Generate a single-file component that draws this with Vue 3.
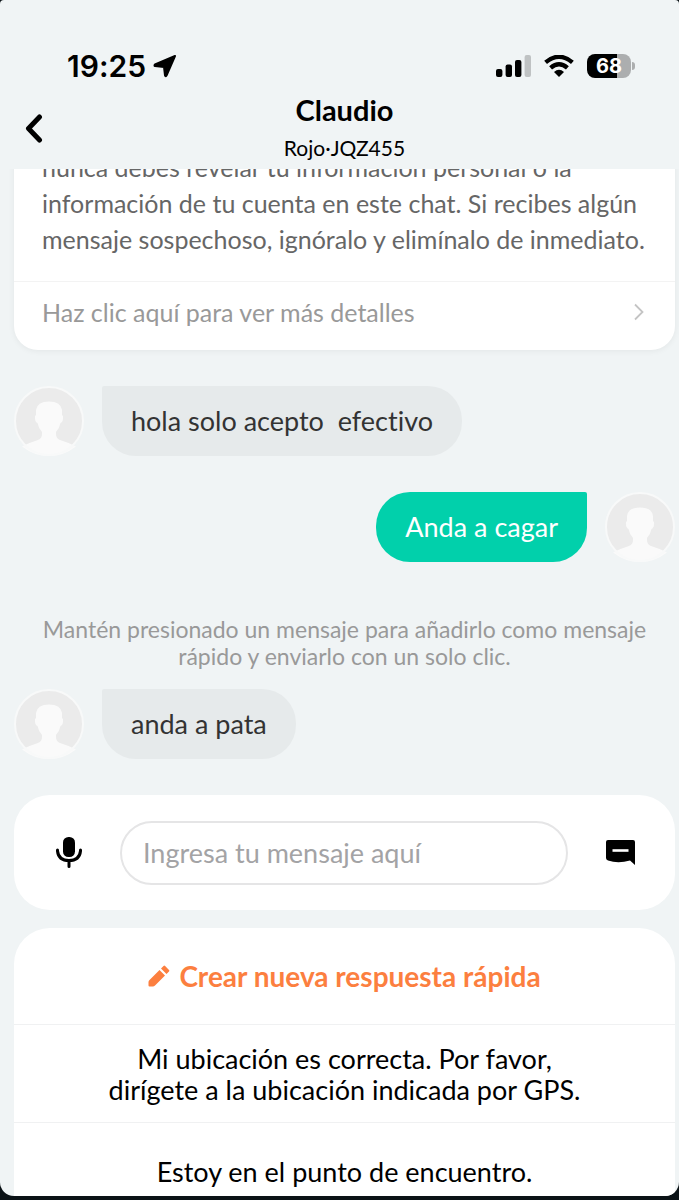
<script setup>
import { ref } from "vue";

const draft = ref("");

const messages = [
    { id: 1, mine: false, text: "hola solo acepto  efectivo" },
    { id: 2, mine: true, text: "Anda a cagar" },
    { id: 3, hint: true, text: "Mantén presionado un mensaje para añadirlo como mensaje rápido y enviarlo con un solo clic." },
    { id: 4, mine: false, text: "anda a pata" },
];

const quickReplies = [
    "Mi ubicación es correcta. Por favor, dirígete a la ubicación indicada por GPS.",
    "Estoy en el punto de encuentro.",
];

const useReply = text => {
    draft.value = text;
};
</script>

<template>
    <div class="device">
        <main class="screen">
            <header>
                <div class="status">
                    <div class="clock">
                        <span>19:25</span>
                        <svg width="24" height="24" viewBox="0 0 24 24">
                            <path d="M22 2 2 10.5Q1 11.5 2 12L11 13 12 21.5Q12.500 23 13.500 21.500Z" stroke="#000" stroke-width="2" stroke-linejoin="round" />
                        </svg>
                    </div>
                    <div class="signals">
                        <svg width="35" height="22" viewBox="0 0 35 22">
                            <rect x="0" y="14" width="6.4" height="8" rx="2" />
                            <rect x="9.6" y="9.6" width="6.4" height="12.4" rx="2" />
                            <rect x="19" y="5" width="6.4" height="17" rx="2" />
                            <rect x="28.6" y="0" width="6.4" height="22" rx="2" fill="#bfc2c3" />
                        </svg>
                        <svg width="30" height="22" viewBox="0 0 30 22">
                            <path d="M1.6 7.4Q15-3.8 28.4 7.4M6.6 12.8Q15 5.6 23.4 12.8" fill="none" stroke="#000" stroke-width="4.4" />
                            <path d="M15 22 10 17Q15 12.6 20 17Z" />
                        </svg>
                        <div class="battery"><span>68</span></div>
                    </div>
                </div>
                <div class="title-bar">
                    <button class="back" aria-label="Volver">
                        <svg width="20" height="30" viewBox="0 0 20 30">
                            <path d="M15.5 4 4.5 15.5 15.5 27" fill="none" stroke="#000" stroke-width="5" stroke-linecap="round" stroke-linejoin="round" />
                        </svg>
                    </button>
                    <div class="driver">
                        <h1>Claudio</h1>
                        <p>Rojo·JQZ455</p>
                    </div>
                </div>
            </header>

            <section class="chat">
                <article class="notice">
                    <p>nunca debes revelar tu información personal o la información de tu cuenta en este chat. Si recibes algún mensaje sospechoso, ignóralo y elimínalo de inmediato.</p>
                    <a href="#">
                        <span>Haz clic aquí para ver más detalles</span>
                        <svg width="10" height="18" viewBox="0 0 10 18">
                            <path d="M1 1.5 8.5 9 1 16.5" fill="none" stroke="#c4c4c4" stroke-width="1.8" />
                        </svg>
                    </a>
                </article>

                <template v-for="message in messages" :key="message.id">
                    <p v-if="message.hint" class="hint">{{ message.text }}</p>
                    <div v-else class="message" :class="{ mine: message.mine }">
                        <svg class="avatar" width="70" height="70" viewBox="0 0 70 70">
                            <circle cx="35" cy="35" r="34" fill="#ebebeb" />
                            <path d="M8 60.5Q17 56 24 54Q28 52.5 28 48V46Q24.5 42 23.5 37Q20.5 36 21 30L22 29V24Q23 15.5 35 15.5T48 24V29L49 30Q49.5 36 46.5 37Q45.5 42 42 46V48Q42 52.5 46 54Q53 56 62 60.5Q50 70 35 70T8 60.5Z" fill="#fafafa" />
                            <circle cx="35" cy="35" r="34" fill="none" stroke="#f8f9f9" stroke-width="2" />
                        </svg>
                        <p class="bubble">{{ message.text }}</p>
                    </div>
                </template>
            </section>

            <form class="composer" @submit.prevent>
                <button type="button" aria-label="Grabar audio">
                    <svg width="26" height="31" viewBox="0 0 26 31">
                        <rect x="7" y="0" width="12" height="20" rx="5.5" />
                        <path d="M1.5 13V14Q2.5 23.5 13 23.5T24.5 14V13M13 24V29.5" fill="none" stroke="#000" stroke-width="3" stroke-linecap="round" />
                    </svg>
                </button>
                <input v-model="draft" type="text" aria-label="Mensaje" placeholder="Ingresa tu mensaje aquí">
                <button type="button" aria-label="Respuestas rápidas">
                    <svg width="29" height="25" viewBox="0 0 29 25">
                        <path d="M2 0H27Q29 0 29 2V25L24 20.5Q12 24 2 20.5 0 19.5 0 18V2Q0 0 2 0Z" />
                        <path d="M6.5 10.5H22.5" stroke="#fff" stroke-width="2.6" />
                    </svg>
                </button>
            </form>

            <section class="quick">
                <button class="create">
                    <svg width="22" height="22" viewBox="0 0 22 22">
                        <path d="M11.5 5 17 10.5 7 20.5Q6 21.5 5 21.5H1.5Q.5 21.5 .5 20.5V17Q.5 16 1.5 15ZM13 3.5 15.5 1Q16.3 .2 17.1 1L21 4.9Q21.8 5.7 21 6.5L18.5 9Z" fill="#fc7f3f" />
                    </svg>
                    <span>Crear nueva respuesta rápida</span>
                </button>
                <button v-for="reply in quickReplies" :key="reply" class="reply" @click="useReply(reply)">
                    <span>{{ reply }}</span>
                </button>
            </section>
        </main>
    </div>
</template>

<style>
body {
    margin: 0;
    background: #0b1216;
}
</style>

<style scoped>
* {
    box-sizing: border-box;
}

h1,
p {
    margin: 0;
}

button {
    padding: 0;
    border: 0;
    background: none;
    color: inherit;
    font: inherit;
    cursor: pointer;
}

svg {
    display: block;
    flex: none;
}

.device {
    display: flex;
    min-height: 100vh;
    padding-bottom: 4px;
    background: #0b1216;
    font-family: Lato, "Noto Sans", sans-serif;
    font-variant-ligatures: none;
    color: #000;
}

.screen {
    display: flex;
    flex: 1;
    flex-direction: column;
    min-width: 0;
    overflow: hidden;
    border-radius: 4px 4px 14px 14px;
    background: #f0f4f5;
}

header {
    padding-top: 48px;
}

.status {
    display: flex;
    align-items: center;
    justify-content: space-between;
    height: 36px;
    padding: 0 48px 0 67px;
    font-family: Inter, sans-serif;
}

.clock {
    display: flex;
    align-items: center;
    gap: 7px;
    font-size: 30px;
    font-weight: 600;
}

.signals {
    display: flex;
    align-items: center;
    gap: 13px;
}

.battery {
    position: relative;
    width: 44px;
    height: 24px;
    border-radius: 8px;
    background: linear-gradient(90deg, #000 68%, #acaeaf 68%);
    color: #fff;
    font-size: 20px;
    font-weight: 700;
    line-height: 24px;
    text-align: center;
}

.battery::after {
    content: "";
    position: absolute;
    top: 8px;
    right: -4px;
    width: 3px;
    height: 8px;
    border-radius: 0 3px 3px 0;
    background: #acaeaf;
}

.title-bar {
    display: grid;
    grid-template-columns: 48px 1fr 48px;
    align-items: center;
    height: 85px;
    padding: 2px 10px 0 20px;
}

.back {
    display: flex;
    align-items: center;
    height: 48px;
    padding-left: 4px;
}

.driver {
    text-align: center;
}

.driver h1 {
    font-size: 29px;
    font-weight: 700;
    line-height: 40px;
}

.driver p {
    font-size: 21px;
    line-height: 36px;
}

/* the list is scrolled, so the first line of the notice is partly hidden */
.chat {
    display: flex;
    flex-direction: column;
    padding: 0 4px 36px 14px;
    overflow: hidden;
}

.notice {
    margin: -20px 0 36px;
    border-radius: 0 0 24px 24px;
    background: #fff;
    box-shadow: 0 1px 6px rgba(0, 0, 0, 0.06);
    font-size: 25px;
}

.notice p {
    padding: 0 26px 24px 28px;
    color: #666;
    line-height: 36px;
}

.notice a {
    display: flex;
    align-items: center;
    justify-content: space-between;
    height: 69px;
    padding: 0 31px 8px 28px;
    border-top: 1px solid #f3f3f3;
    color: #999;
    text-decoration: none;
}

.message {
    display: flex;
    gap: 18px;
    margin-bottom: 36px;
}

.message:last-child {
    margin-bottom: 0;
}

.mine {
    flex-direction: row-reverse;
}

.bubble {
    height: 70px;
    padding: 0 29px;
    border-radius: 2px 34px 34px 34px;
    background: #e6eaeb;
    color: #333;
    font-size: 27px;
    line-height: 70px;
    white-space: pre;
}

.mine .bubble {
    border-radius: 34px 2px 34px 34px;
    background: #01d0ab;
    color: #fff;
}

.hint {
    margin: 18px 20px 19px;
    color: #999;
    font-size: 23px;
    line-height: 27px;
    text-align: center;
}

.composer {
    display: flex;
    align-items: center;
    gap: 38px;
    height: 115px;
    margin: 0 4px 18px 14px;
    padding: 0 40px 0 42px;
    border-radius: 36px;
    background: #fff;
}

.composer input {
    flex: 1;
    min-width: 0;
    height: 64px;
    padding: 0 21px;
    border: 2px solid #e5e5e6;
    border-radius: 32px;
    background: #fff;
    outline: none;
    font: inherit;
    font-size: 27px;
}

.composer input::placeholder {
    color: #a3a3a5;
    opacity: 1;
}

.quick {
    display: flex;
    flex: 1;
    flex-direction: column;
    margin: 0 4px 0 14px;
    border-radius: 36px 36px 0 0;
    background: #fff;
}

.create {
    display: flex;
    align-items: center;
    justify-content: center;
    gap: 9px;
    height: 96px;
    color: #fc7f3f;
    font-size: 28px;
    font-weight: 700;
}

.reply {
    padding: 18px 90px 17px;
    border-top: 1px solid #f0f1f2;
    font-size: 27px;
    line-height: 31px;
}

.reply:last-child {
    padding-top: 33px;
    padding-bottom: 8px;
}
</style>
